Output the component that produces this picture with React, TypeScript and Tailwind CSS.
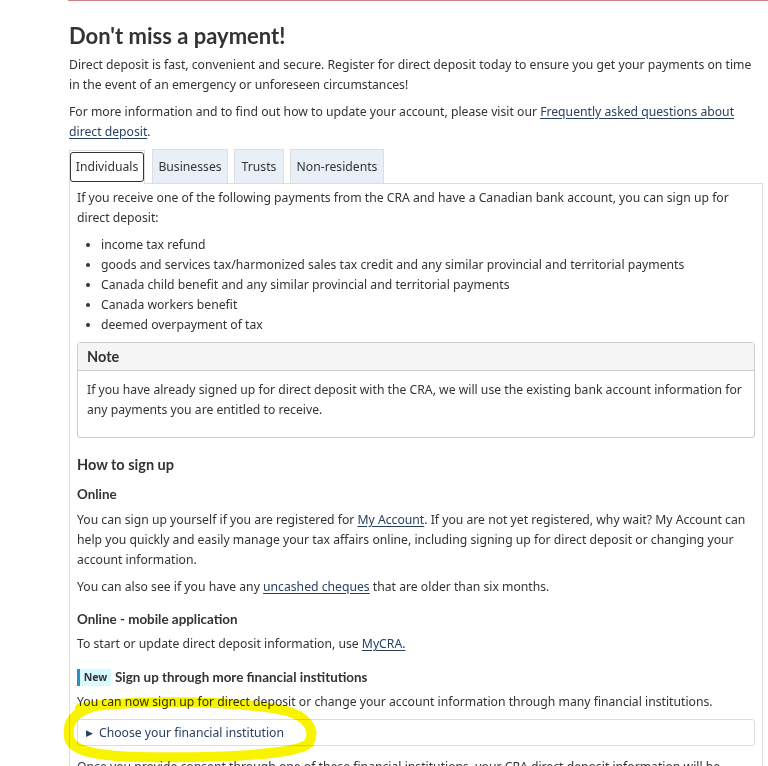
import React from "react";

const Link = ({ children }: { children: React.ReactNode }) => (
  <a href="#" className="text-[#284162] underline underline-offset-2">
    {children}
  </a>
);

export default function App() {
  return (
    <div className="relative w-[768px] h-[766px] overflow-hidden bg-white font-['Noto_Sans',sans-serif] text-[12.2px] leading-[20px] text-[#333]">
      <div className="ml-[68px] h-[1px] bg-[#d08286]" />
      <div className="ml-[69px] w-[694px]">
        <h1 className="mt-[21px] font-['Lato',sans-serif] font-bold text-[22px] leading-[28px] text-[#333]">
          Don't miss a payment!
        </h1>
        <p className="mt-[5px]">
          Direct deposit is fast, convenient and secure. Register for direct deposit today to ensure you get your payments on time in the event of an emergency or unforeseen circumstances!
        </p>
        <p className="mt-[7px]">
          For more information and to find out how to update your account, please visit our{" "}
          <Link>Frequently asked questions about direct deposit</Link>.
        </p>

        {/* Tabs */}
        <div className="mt-[8px] flex items-end h-[34px] border-b border-[#ddd]">
          <div className="h-[34px] -mb-px border border-b-0 border-[#ddd] bg-white pt-[1px] w-[76px]">
            <div className="h-[30px] w-[74px] border border-[#333] rounded-[3px] flex items-center justify-center">
              Individuals
            </div>
          </div>
          <div className="ml-[7px] h-[34px] w-[76px] border border-b-0 border-[#ddd] bg-[#e9eff7] flex items-center justify-center">
            Businesses
          </div>
          <div className="ml-[6px] h-[34px] w-[50px] border border-b-0 border-[#ddd] bg-[#e9eff7] flex items-center justify-center">
            Trusts
          </div>
          <div className="ml-[6px] h-[34px] w-[94px] border border-b-0 border-[#ddd] bg-[#e9eff7] flex items-center justify-center">
            Non-residents
          </div>
        </div>

        {/* Panel */}
        <div className="border-l border-r border-[#ddd] px-[7px] pt-[4px] pb-[40px]">
          <p>
            If you receive one of the following payments from the CRA and have a Canadian bank account, you can sign up for direct deposit:
          </p>
          <ul className="mt-[7px] list-disc pl-[24px]">
            <li>income tax refund</li>
            <li>goods and services tax/harmonized sales tax credit and any similar provincial and territorial payments</li>
            <li>Canada child benefit and any similar provincial and territorial payments</li>
            <li>Canada workers benefit</li>
            <li>deemed overpayment of tax</li>
          </ul>

          <section className="mt-[7px] border border-[#ccc] rounded-[3px]">
            <div className="h-[28px] bg-[#f5f5f5] border-b border-[#ccc] px-[9px] flex items-center font-['Lato',sans-serif] font-bold text-[14.5px] text-[#333]">
              Note
            </div>
            <div className="px-[9px] pt-[9px] pb-[17px]">
              <p>
                If you have already signed up for direct deposit with the CRA, we will use the existing bank account information for any payments you are entitled to receive.
              </p>
            </div>
          </section>

          <h2 className="mt-[15px] font-['Lato',sans-serif] font-bold text-[14.5px] leading-[24px]">
            How to sign up
          </h2>
          <h3 className="mt-[6px] font-['Lato',sans-serif] font-bold text-[13.4px] leading-[22px]">
            Online
          </h3>
          <p className="mt-[5px]">
            You can sign up yourself if you are registered for <Link>My Account</Link>. If you are not yet registered, why wait? My Account can help you quickly and easily manage your tax affairs online, including signing up for direct deposit or changing your account information.
          </p>
          <p className="mt-[7px]">
            You can also see if you have any <Link>uncashed cheques</Link> that are older than six months.
          </p>
          <h3 className="mt-[11px] font-['Lato',sans-serif] font-bold text-[13.4px] leading-[22px]">
            Online - mobile application
          </h3>
          <p className="mt-[4px]">
            To start or update direct deposit information, use <Link>MyCRA.</Link>
          </p>
          <div className="mt-[12px] flex items-center h-[22px]">
            <span className="h-[17px] w-[34px] border-l-[3px] border-[#2b8fc1] bg-[#d7faff] flex items-center justify-center font-bold text-[10.5px] leading-none text-[#333]">
              New
            </span>
            <h3 className="ml-[4px] font-['Lato',sans-serif] font-bold text-[13.4px] leading-[22px]">
              Sign up through more financial institutions
            </h3>
          </div>
          <p className="mt-[4px]">
            You can now sign up for direct deposit or change your account information through many financial institutions.
          </p>
          <div className="mt-[7px] h-[27px] border border-[#ddd] rounded-[3px] flex items-center pl-[8px] text-[#284162]">
            <span className="text-[8.5px] mr-[6px]">&#9654;</span>
            Choose your financial institution
          </div>
          <p className="mt-[11px]">
            Once you provide consent through one of these financial institutions, your CRA direct deposit information will be updated.
          </p>
        </div>
      </div>

      {/* Hand-drawn highlight annotation */}
      <svg
        className="pointer-events-none absolute left-0 top-0 mix-blend-multiply"
        width="768"
        height="766"
        viewBox="0 0 768 766"
      >
        <path
          d="M 80 708 C 130 700, 230 700, 283 710 C 308 716, 316 730, 309 743 C 298 755, 220 758, 140 757 C 95 756, 71 751, 69 737 C 67 722, 73 712, 98 705"
          fill="none"
          stroke="#f8f400"
          strokeWidth="10"
          strokeLinecap="round"
        />
      </svg>
    </div>
  );
}
